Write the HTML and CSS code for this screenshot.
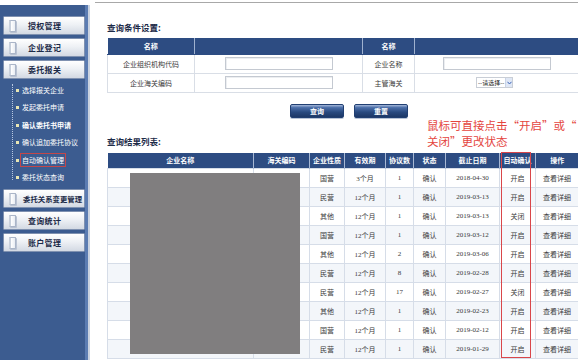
FILE: index.html
```html
<!DOCTYPE html>
<html lang="zh-CN">
<head>
<meta charset="utf-8">
<title>自动确认管理</title>
<link rel="stylesheet" href="styles.css">
</head>
<body>
<div class="page">
  <aside class="sidebar">
    <div class="menu-btn"><span class="doc"></span><span class="label">授权管理</span></div>
    <div class="menu-btn"><span class="doc"></span><span class="label">企业登记</span></div>
    <div class="menu-btn"><span class="doc"></span><span class="label">委托报关</span></div>
    <ul class="submenu">
      <li>选择报关企业</li>
      <li>发起委托申请</li>
      <li class="strong">确认委托书申请</li>
      <li>确认追加委托协议</li>
      <li><span class="marked">自动确认管理</span></li>
      <li>委托状态查询</li>
    </ul>
    <div class="menu-btn"><span class="doc"></span><span class="label narrow">委托关系变更管理</span></div>
    <div class="menu-btn"><span class="doc"></span><span class="label">查询统计</span></div>
    <div class="menu-btn"><span class="doc"></span><span class="label">账户管理</span></div>
  </aside>

  <main class="main">
    <h2 class="title first">查询条件设置:</h2>
    <table class="search">
      <colgroup><col class="c1"><col class="c2"><col class="c3"><col class="c4"></colgroup>
      <tr class="head"><th>名称</th><th></th><th>名称</th><th></th></tr>
      <tr><td>企业组织机构代码</td><td><span class="input"></span></td><td>企业名称</td><td><span class="input"></span></td></tr>
      <tr><td>企业海关编码</td><td><span class="input"></span></td><td>主管海关</td><td class="sel-cell"><span class="select"><span class="sel-text">--请选择--</span><span class="sel-arrow"><svg width="5" height="4" viewBox="0 0 5 4"><path d="M0.5 0.8 L2.5 3 L4.5 0.8" fill="none" stroke="#3a63b8" stroke-width="1"/></svg></span></span></td></tr>
    </table>

    <div class="actions">
      <button class="btn">查询</button>
      <button class="btn">重置</button>
    </div>

    <p class="note">鼠标可直接点击“开启”或“<br>关闭”更改状态</p>

    <h2 class="title second">查询结果列表:</h2>
    <div class="result-wrap">
      <table class="result">
        <colgroup>
          <col style="width:146px"><col style="width:56px"><col style="width:35px"><col style="width:41px"><col style="width:28px"><col style="width:32px"><col style="width:54px"><col style="width:36px"><col style="width:43px">
        </colgroup>
        <tr class="head"><th>企业名称</th><th>海关编码</th><th>企业性质</th><th>有效期</th><th>协议数</th><th>状态</th><th>截止日期</th><th>自动确认</th><th>操作</th></tr>
        <tr><td></td><td></td><td>国营</td><td>3个月</td><td>1</td><td>确认</td><td>2018-04-30</td><td>开启</td><td>查看详细</td></tr>
        <tr><td></td><td></td><td>民营</td><td>12个月</td><td>1</td><td>确认</td><td>2019-03-13</td><td>开启</td><td>查看详细</td></tr>
        <tr><td></td><td></td><td>其他</td><td>12个月</td><td>1</td><td>确认</td><td>2019-03-13</td><td>关闭</td><td>查看详细</td></tr>
        <tr><td></td><td></td><td>国营</td><td>12个月</td><td>1</td><td>确认</td><td>2019-03-12</td><td>开启</td><td>查看详细</td></tr>
        <tr><td></td><td></td><td>其他</td><td>12个月</td><td>2</td><td>确认</td><td>2019-03-06</td><td>开启</td><td>查看详细</td></tr>
        <tr><td></td><td></td><td>民营</td><td>12个月</td><td>8</td><td>确认</td><td>2019-02-28</td><td>开启</td><td>查看详细</td></tr>
        <tr><td></td><td></td><td>民营</td><td>12个月</td><td>17</td><td>确认</td><td>2019-02-27</td><td>关闭</td><td>查看详细</td></tr>
        <tr><td></td><td></td><td>其他</td><td>12个月</td><td>1</td><td>确认</td><td>2019-02-23</td><td>开启</td><td>查看详细</td></tr>
        <tr><td></td><td></td><td>国营</td><td>12个月</td><td>1</td><td>确认</td><td>2019-02-12</td><td>开启</td><td>查看详细</td></tr>
        <tr><td></td><td></td><td>民营</td><td>12个月</td><td>1</td><td>确认</td><td>2019-01-29</td><td>开启</td><td>查看详细</td></tr>
      </table>
      <div class="redact"></div>
      <div class="col-mark"></div>
    </div>
  </main>
</div>
</body>
</html>
```

FILE: styles.css
```css
* { box-sizing: border-box; margin: 0; padding: 0; }
html, body { width: 578px; height: 360px; overflow: hidden; background: #fff; }
body { font-family: "Noto Sans CJK SC", "Liberation Sans", sans-serif; color: #333; }

.page { display: flex; height: 360px; }

/* Sidebar */
.sidebar {
  width: 88px; flex: none; margin-top: 5px;
  background: #3c5c90;
  border-right: 3px solid #5b7cb2;
  box-shadow: 2px 0 0 #c9d2e0;
  padding: 11px 0 0 3px;
  display: flex; flex-direction: column; gap: 3px;
}
.menu-btn {
  height: 19px; display: flex; align-items: center;
  background: linear-gradient(#ffffff, #eef1f5 45%, #d3d9e3);
  border: 1px solid #7f91b0; border-radius: 1px;
  padding-left: 5px; overflow: hidden;
}
.doc {
  width: 7px; height: 12px; flex: none;
  background: linear-gradient(90deg, #ffffff, #e9edf3);
  border: 1px solid #aab5c8; border-left: 2px solid #c8d0dc;
  border-radius: 1px;
  box-shadow: 1px 1px 0 #b9c2d2;
}
.label { margin-left: 12px; font-size: 8px; font-weight: bold; color: #1c2a48; letter-spacing: 0.3px; white-space: nowrap; }
.label.narrow { margin-left: 7px; font-size: 7.4px; letter-spacing: 0; }

.submenu { list-style: none; position: relative; }
.submenu::before {
  content: ""; position: absolute; left: 9px; top: 2px; bottom: 6px;
  border-left: 1px dotted #b9c8e2;
}
.submenu li {
  height: 17.4px; line-height: 17.4px; padding-left: 19px;
  font-size: 7px; color: #ffffff; position: relative; white-space: nowrap;
}
.submenu li::before {
  content: ""; position: absolute; left: 13px; top: 7px;
  width: 3px; height: 3px; background: #e8e6b4;
}
.submenu li.strong { font-weight: bold; }
.marked {
  display: inline-block; line-height: 12px; padding: 0 1px;
  margin-left: -2px; border: 1px solid #c3474a;
}

/* Main */
.main {
  flex: 1; position: relative;
  margin-left: 7px; margin-top: 2px;
  border-top: 1px solid #a8a8a8;
  padding-left: 12px;
}
.title { font-size: 8.5px; line-height: 12px; height: 12px; font-weight: bold; color: #1c2b48; }
.title.first { margin-top: 18px; }
.title.second { margin-top: 17px; }

.search {
  margin-top: 5px; width: 471px; border-collapse: collapse; table-layout: fixed;
  font-size: 7px;
}
.search .c1 { width: 87px; }
.search .c2 { width: 168px; }
.search .c3 { width: 52px; }
.search .c4 { width: 164px; }
.search tr { height: 19px; }
.search tr.head { height: 16px; }
.search th {
  background: #2d4c82; color: #fff; font-weight: bold;
  border-right: 1px solid #9fb1cf; border-bottom: 1px solid #2d4c82;
}
.search th:last-child { border-right: none; }
.search td { border: 1px solid #d9dee6; text-align: center; color: #3a3a3a; }
.input {
  display: inline-block; vertical-align: middle;
  width: 108px; height: 13px;
  border: 1px solid #c4c9d1; background: #fff;
  box-shadow: inset 1px 1px 0 #eceef1;
}
.search td.sel-cell { text-align: left; padding-left: 61px; }
.select {
  display: inline-flex; align-items: center; vertical-align: middle;
  height: 11px; border: 1px solid #c9ced6; background: #fff;
}
.sel-text { font-size: 6px; color: #222; padding: 0 1px; line-height: 9px; }
.sel-arrow {
  width: 7px; height: 9px; display: flex; align-items: center; justify-content: center;
  background: #dfe7f5; border-left: 1px solid #c9d3e6;
}

.actions { display: flex; gap: 10px; margin-top: 11px; padding-left: 183px; }
.btn {
  width: 54px; height: 14px;
  font-family: inherit; font-size: 7px; font-weight: bold; color: #fff;
  border: 1px solid #213f72; border-radius: 2px;
  background: linear-gradient(#a5b8da 0%, #4b6ea8 22%, #28497f 60%, #1c3866 100%);
  box-shadow: 0 1px 0 #b9c4d6;
}

.note {
  position: absolute; left: 332px; top: 114px;
  font-size: 11.5px; line-height: 16px; color: #e4453e; white-space: nowrap;
}

.result-wrap { position: relative; margin-top: 6px; width: 471px; }
.result { width: 471px; border-collapse: collapse; table-layout: fixed; font-size: 7px; }
.result tr { height: 19px; }
.result tr.head { height: 16px; }
.result th {
  background: #2d4c82; color: #fff; font-weight: bold; white-space: nowrap;
  border-right: 1px solid #a7b8d4;
}
.result th:last-child { border-right: none; }
.result td {
  border: 1px solid #d6dde8; text-align: center; color: #3a3a3a;
  font-family: "Liberation Serif", "Noto Sans CJK SC", serif; white-space: nowrap;
}
.result tr:nth-child(odd) td { background: #f3f6fa; }

.redact {
  position: absolute; left: 23px; top: 20px; width: 170px; height: 181px;
  background: #807e7f;
}
.col-mark {
  position: absolute; left: 394px; top: -1px; width: 30px; height: 206px;
  border: 1px solid #d9464a;
}
```
